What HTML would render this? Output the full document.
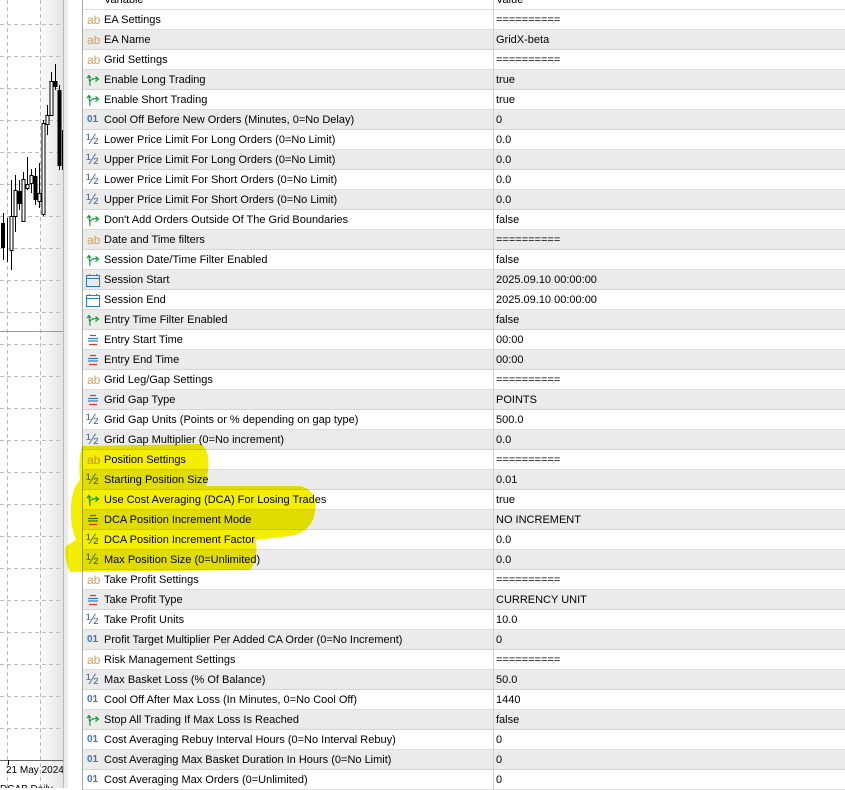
<!DOCTYPE html>
<html><head><meta charset="utf-8"><style>
*{margin:0;padding:0;box-sizing:border-box}
body{width:845px;height:788px;overflow:hidden;background:#fff;font-family:"Liberation Sans",sans-serif;font-size:11px;color:#000;position:relative}
#chart{position:absolute;left:0;top:0;width:63px;height:788px;background:linear-gradient(to right,#fff 0,#fff 60%,#e4e4e4 100%)}
#strip{position:absolute;left:63px;top:0;width:5px;height:788px;background:#ececec;border-left:1px solid #b8b8b8}
#tbl{position:absolute;left:82px;top:-10px;width:763px;border-left:1px solid #a8a8a8}
.r{height:20px;position:relative;border-bottom:1px solid #dcdcdc;white-space:nowrap}
.r.g{background:#ebebeb;border-bottom:1px solid #d4d4d4}
.r .n{position:absolute;left:21px;top:4px}
.r .v{position:absolute;left:410px;top:0;height:20px;border-left:1px solid #d0d0d0;padding:4px 0 0 2px}
.ic{position:absolute;left:3px;top:3px;width:14px;height:14px}
.ab{position:absolute;left:4px;top:3px;color:#c8a060;font-size:12px}
.o1{position:absolute;left:4px;top:4px;color:#3a78c0;font-size:10px;font-weight:bold}
.hf{position:absolute;left:3px;top:1px;color:#4a6a90;font-size:15px}
#hl{position:absolute;left:0;top:0;mix-blend-mode:multiply;pointer-events:none}
</style></head><body>
<div id="chart">
<svg width="63" height="788" style="position:absolute;left:0;top:0">
<g stroke="#bbb" stroke-dasharray="4,3" stroke-width="1">
<line x1="7.5" y1="0" x2="7.5" y2="788"/><line x1="40.5" y1="0" x2="40.5" y2="788"/>
<line x1="0" y1="24.5" x2="63" y2="24.5"/><line x1="0" y1="56.5" x2="63" y2="56.5"/><line x1="0" y1="88.5" x2="63" y2="88.5"/><line x1="0" y1="120.5" x2="63" y2="120.5"/><line x1="0" y1="152.5" x2="63" y2="152.5"/><line x1="0" y1="184.5" x2="63" y2="184.5"/><line x1="0" y1="216.5" x2="63" y2="216.5"/><line x1="0" y1="248.5" x2="63" y2="248.5"/><line x1="0" y1="280.5" x2="63" y2="280.5"/><line x1="0" y1="312.5" x2="63" y2="312.5"/><line x1="0" y1="344.5" x2="63" y2="344.5"/><line x1="0" y1="376.5" x2="63" y2="376.5"/><line x1="0" y1="408.5" x2="63" y2="408.5"/><line x1="0" y1="440.5" x2="63" y2="440.5"/><line x1="0" y1="472.5" x2="63" y2="472.5"/><line x1="0" y1="504.5" x2="63" y2="504.5"/><line x1="0" y1="536.5" x2="63" y2="536.5"/><line x1="0" y1="568.5" x2="63" y2="568.5"/><line x1="0" y1="600.5" x2="63" y2="600.5"/><line x1="0" y1="632.5" x2="63" y2="632.5"/><line x1="0" y1="664.5" x2="63" y2="664.5"/><line x1="0" y1="696.5" x2="63" y2="696.5"/><line x1="0" y1="728.5" x2="63" y2="728.5"/>
</g>
<line x1="0" y1="331.5" x2="63" y2="331.5" stroke="#999"/>
<line x1="0" y1="760.5" x2="63" y2="760.5" stroke="#666"/>
<line x1="8.5" y1="760" x2="8.5" y2="765" stroke="#000"/>
<g stroke="#000" stroke-width="1" fill="#fff">
<line x1="3.5" y1="213" x2="3.5" y2="260"/><rect x="1.5" y="223.5" width="3" height="24" fill="#000"/>
<line x1="7.5" y1="218" x2="7.5" y2="262"/>
<line x1="11.5" y1="180" x2="11.5" y2="270"/><rect x="10" y="216.5" width="3" height="34"/>
<line x1="15.5" y1="175" x2="15.5" y2="232"/><rect x="14" y="190.5" width="3" height="26"/>
<line x1="19.5" y1="180" x2="19.5" y2="210"/><rect x="18" y="191.5" width="3" height="12" fill="#000"/>
<line x1="23.5" y1="172" x2="23.5" y2="222"/><rect x="22" y="179.5" width="3" height="42"/>
<line x1="27.5" y1="157" x2="27.5" y2="190"/><rect x="26" y="184.5" width="3" height="4"/>
<line x1="31.5" y1="169" x2="31.5" y2="193"/><rect x="30" y="175.5" width="3" height="8"/>
<line x1="35.5" y1="168" x2="35.5" y2="205"/><rect x="34" y="176.5" width="3" height="23" fill="#000"/>
<line x1="39.5" y1="163" x2="39.5" y2="208"/><rect x="38" y="193.5" width="3" height="8"/>
<line x1="43.5" y1="120" x2="43.5" y2="216"/><rect x="42" y="123.5" width="3" height="91"/>
<line x1="47.5" y1="105" x2="47.5" y2="135"/><rect x="46" y="115.5" width="3" height="9"/>
<line x1="51.5" y1="72" x2="51.5" y2="116"/><rect x="50" y="81.5" width="3" height="34"/>
<line x1="55.5" y1="64" x2="55.5" y2="90"/><rect x="54" y="81.5" width="3" height="5" fill="#000"/>
<line x1="59.5" y1="85" x2="59.5" y2="170"/><rect x="58" y="90.5" width="3" height="75" fill="#000"/>
<line x1="62.5" y1="130" x2="62.5" y2="170"/>
</g>
<text x="6" y="773" font-family="Liberation Sans" font-size="10" fill="#000">21 May 2024</text>
<text x="0" y="792" font-family="Liberation Sans" font-size="10" fill="#000">DCAB Daily</text>
</svg>
</div>
<div id="strip"></div>
<div id="tbl">
<div class="r"><span class="n">Variable</span><span class="v">Value</span></div>
<div class="r"><span class="ab">ab</span><span class="n">EA Settings</span><span class="v">==========</span></div>
<div class="r g"><span class="ab">ab</span><span class="n">EA Name</span><span class="v">GridX-beta</span></div>
<div class="r"><span class="ab">ab</span><span class="n">Grid Settings</span><span class="v">==========</span></div>
<div class="r g"><svg class="ic" viewBox="0 0 14 14"><path d="M4 13 C4 9 3 6 3 3 M1 5 L3 2.5 L5 5 M3.5 9 C5 6 8 5 12 6 M9.5 3.5 L12.5 6 L9.5 8.5" stroke="#1aa040" stroke-width="1.2" fill="none"/></svg><span class="n">Enable Long Trading</span><span class="v">true</span></div>
<div class="r"><svg class="ic" viewBox="0 0 14 14"><path d="M4 13 C4 9 3 6 3 3 M1 5 L3 2.5 L5 5 M3.5 9 C5 6 8 5 12 6 M9.5 3.5 L12.5 6 L9.5 8.5" stroke="#1aa040" stroke-width="1.2" fill="none"/></svg><span class="n">Enable Short Trading</span><span class="v">true</span></div>
<div class="r g"><span class="o1">01</span><span class="n">Cool Off Before New Orders (Minutes, 0=No Delay)</span><span class="v">0</span></div>
<div class="r"><span class="hf">½</span><span class="n">Lower Price Limit For Long Orders (0=No Limit)</span><span class="v">0.0</span></div>
<div class="r g"><span class="hf">½</span><span class="n">Upper Price Limit For Long Orders (0=No Limit)</span><span class="v">0.0</span></div>
<div class="r"><span class="hf">½</span><span class="n">Lower Price Limit For Short Orders (0=No Limit)</span><span class="v">0.0</span></div>
<div class="r g"><span class="hf">½</span><span class="n">Upper Price Limit For Short Orders (0=No Limit)</span><span class="v">0.0</span></div>
<div class="r"><svg class="ic" viewBox="0 0 14 14"><path d="M4 13 C4 9 3 6 3 3 M1 5 L3 2.5 L5 5 M3.5 9 C5 6 8 5 12 6 M9.5 3.5 L12.5 6 L9.5 8.5" stroke="#1aa040" stroke-width="1.2" fill="none"/></svg><span class="n">Don't Add Orders Outside Of The Grid Boundaries</span><span class="v">false</span></div>
<div class="r g"><span class="ab">ab</span><span class="n">Date and Time filters</span><span class="v">==========</span></div>
<div class="r"><svg class="ic" viewBox="0 0 14 14"><path d="M4 13 C4 9 3 6 3 3 M1 5 L3 2.5 L5 5 M3.5 9 C5 6 8 5 12 6 M9.5 3.5 L12.5 6 L9.5 8.5" stroke="#1aa040" stroke-width="1.2" fill="none"/></svg><span class="n">Session Date/Time Filter Enabled</span><span class="v">false</span></div>
<div class="r g"><svg class="ic" viewBox="0 0 14 14"><rect x="0.5" y="2.5" width="13" height="11" fill="none" stroke="#2a7ad0"/><line x1="0.5" y1="5.5" x2="13.5" y2="5.5" stroke="#2a7ad0"/><line x1="3.5" y1="1" x2="3.5" y2="3" stroke="#2a7ad0"/><line x1="10.5" y1="1" x2="10.5" y2="3" stroke="#2a7ad0"/></svg><span class="n">Session Start</span><span class="v">2025.09.10 00:00:00</span></div>
<div class="r"><svg class="ic" viewBox="0 0 14 14"><rect x="0.5" y="2.5" width="13" height="11" fill="none" stroke="#2a7ad0"/><line x1="0.5" y1="5.5" x2="13.5" y2="5.5" stroke="#2a7ad0"/><line x1="3.5" y1="1" x2="3.5" y2="3" stroke="#2a7ad0"/><line x1="10.5" y1="1" x2="10.5" y2="3" stroke="#2a7ad0"/></svg><span class="n">Session End</span><span class="v">2025.09.10 00:00:00</span></div>
<div class="r g"><svg class="ic" viewBox="0 0 14 14"><path d="M4 13 C4 9 3 6 3 3 M1 5 L3 2.5 L5 5 M3.5 9 C5 6 8 5 12 6 M9.5 3.5 L12.5 6 L9.5 8.5" stroke="#1aa040" stroke-width="1.2" fill="none"/></svg><span class="n">Entry Time Filter Enabled</span><span class="v">false</span></div>
<div class="r"><svg class="ic" viewBox="0 0 14 14"><line x1="4" y1="2.5" x2="10" y2="2.5" stroke="#e03030" stroke-width="1.2"/><line x1="2" y1="5.5" x2="12" y2="5.5" stroke="#2a7ad0" stroke-width="1.2"/><line x1="2" y1="8" x2="12" y2="8" stroke="#2a7ad0" stroke-width="1.2"/><line x1="3" y1="11.5" x2="11" y2="11.5" stroke="#e03030" stroke-width="1.2"/></svg><span class="n">Entry Start Time</span><span class="v">00:00</span></div>
<div class="r g"><svg class="ic" viewBox="0 0 14 14"><line x1="4" y1="2.5" x2="10" y2="2.5" stroke="#e03030" stroke-width="1.2"/><line x1="2" y1="5.5" x2="12" y2="5.5" stroke="#2a7ad0" stroke-width="1.2"/><line x1="2" y1="8" x2="12" y2="8" stroke="#2a7ad0" stroke-width="1.2"/><line x1="3" y1="11.5" x2="11" y2="11.5" stroke="#e03030" stroke-width="1.2"/></svg><span class="n">Entry End Time</span><span class="v">00:00</span></div>
<div class="r"><span class="ab">ab</span><span class="n">Grid Leg/Gap Settings</span><span class="v">==========</span></div>
<div class="r g"><svg class="ic" viewBox="0 0 14 14"><line x1="4" y1="2.5" x2="10" y2="2.5" stroke="#e03030" stroke-width="1.2"/><line x1="2" y1="5.5" x2="12" y2="5.5" stroke="#2a7ad0" stroke-width="1.2"/><line x1="2" y1="8" x2="12" y2="8" stroke="#2a7ad0" stroke-width="1.2"/><line x1="3" y1="11.5" x2="11" y2="11.5" stroke="#e03030" stroke-width="1.2"/></svg><span class="n">Grid Gap Type</span><span class="v">POINTS</span></div>
<div class="r"><span class="hf">½</span><span class="n">Grid Gap Units (Points or % depending on gap type)</span><span class="v">500.0</span></div>
<div class="r g"><span class="hf">½</span><span class="n">Grid Gap Multiplier (0=No increment)</span><span class="v">0.0</span></div>
<div class="r"><span class="ab">ab</span><span class="n">Position Settings</span><span class="v">==========</span></div>
<div class="r g"><span class="hf">½</span><span class="n">Starting Position Size</span><span class="v">0.01</span></div>
<div class="r"><svg class="ic" viewBox="0 0 14 14"><path d="M4 13 C4 9 3 6 3 3 M1 5 L3 2.5 L5 5 M3.5 9 C5 6 8 5 12 6 M9.5 3.5 L12.5 6 L9.5 8.5" stroke="#1aa040" stroke-width="1.2" fill="none"/></svg><span class="n">Use Cost Averaging (DCA) For Losing Trades</span><span class="v">true</span></div>
<div class="r g"><svg class="ic" viewBox="0 0 14 14"><line x1="4" y1="2.5" x2="10" y2="2.5" stroke="#e03030" stroke-width="1.2"/><line x1="2" y1="5.5" x2="12" y2="5.5" stroke="#2a7ad0" stroke-width="1.2"/><line x1="2" y1="8" x2="12" y2="8" stroke="#2a7ad0" stroke-width="1.2"/><line x1="3" y1="11.5" x2="11" y2="11.5" stroke="#e03030" stroke-width="1.2"/></svg><span class="n">DCA Position Increment Mode</span><span class="v">NO INCREMENT</span></div>
<div class="r"><span class="hf">½</span><span class="n">DCA Position Increment Factor</span><span class="v">0.0</span></div>
<div class="r g"><span class="hf">½</span><span class="n">Max Position Size (0=Unlimited)</span><span class="v">0.0</span></div>
<div class="r"><span class="ab">ab</span><span class="n">Take Profit Settings</span><span class="v">==========</span></div>
<div class="r g"><svg class="ic" viewBox="0 0 14 14"><line x1="4" y1="2.5" x2="10" y2="2.5" stroke="#e03030" stroke-width="1.2"/><line x1="2" y1="5.5" x2="12" y2="5.5" stroke="#2a7ad0" stroke-width="1.2"/><line x1="2" y1="8" x2="12" y2="8" stroke="#2a7ad0" stroke-width="1.2"/><line x1="3" y1="11.5" x2="11" y2="11.5" stroke="#e03030" stroke-width="1.2"/></svg><span class="n">Take Profit Type</span><span class="v">CURRENCY UNIT</span></div>
<div class="r"><span class="hf">½</span><span class="n">Take Profit Units</span><span class="v">10.0</span></div>
<div class="r g"><span class="o1">01</span><span class="n">Profit Target Multiplier Per Added CA Order (0=No Increment)</span><span class="v">0</span></div>
<div class="r"><span class="ab">ab</span><span class="n">Risk Management Settings</span><span class="v">==========</span></div>
<div class="r g"><span class="hf">½</span><span class="n">Max Basket Loss (% Of Balance)</span><span class="v">50.0</span></div>
<div class="r"><span class="o1">01</span><span class="n">Cool Off After Max Loss (In Minutes, 0=No Cool Off)</span><span class="v">1440</span></div>
<div class="r g"><svg class="ic" viewBox="0 0 14 14"><path d="M4 13 C4 9 3 6 3 3 M1 5 L3 2.5 L5 5 M3.5 9 C5 6 8 5 12 6 M9.5 3.5 L12.5 6 L9.5 8.5" stroke="#1aa040" stroke-width="1.2" fill="none"/></svg><span class="n">Stop All Trading If Max Loss Is Reached</span><span class="v">false</span></div>
<div class="r"><span class="o1">01</span><span class="n">Cost Averaging Rebuy Interval Hours (0=No Interval Rebuy)</span><span class="v">0</span></div>
<div class="r g"><span class="o1">01</span><span class="n">Cost Averaging Max Basket Duration In Hours (0=No Limit)</span><span class="v">0</span></div>
<div class="r"><span class="o1">01</span><span class="n">Cost Averaging Max Orders (0=Unlimited)</span><span class="v">0</span></div>
</div>
<svg id="hl" width="845" height="788"><path d="M82 446 L200 444 Q210 448 208 470 L206 486 L300 486 Q318 490 315 512 Q312 532 290 536 L256 540 Q258 560 250 570 L70 572 Q64 560 66 546 L76 540 Q68 520 72 498 Q74 486 80 480 Q78 460 82 446 Z" fill="#f4ef00"/></svg>
</body></html>
